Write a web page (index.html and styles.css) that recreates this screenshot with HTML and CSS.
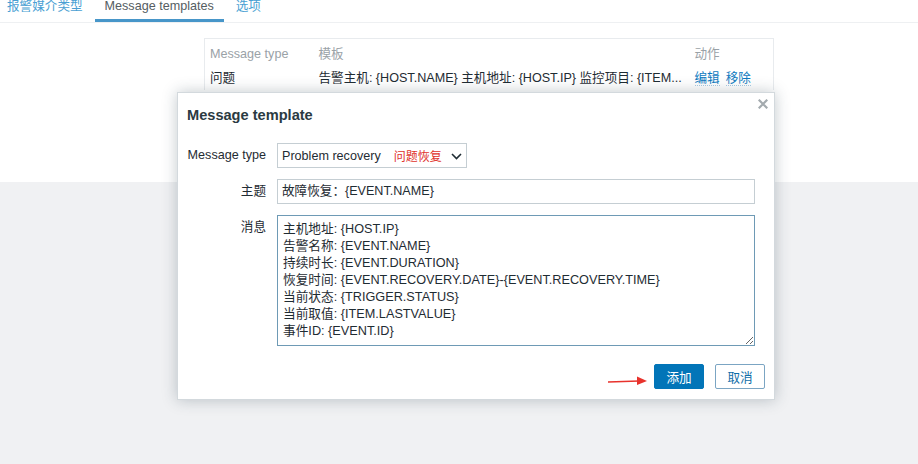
FILE: index.html
```html
<!DOCTYPE html>
<html lang="zh">
<head>
<meta charset="utf-8">
<title>Message template</title>
<link rel="stylesheet" href="styles.css">
</head>
<body>
<div class="content">
  <nav class="tabs">
    <a class="tab first">报警媒介类型</a>
    <a class="tab active">Message templates</a>
    <a class="tab">选项</a>
  </nav>
  <div class="table-area">
    <table class="tpl-table">
      <thead>
        <tr><th class="c1">Message type</th><th class="c2">模板</th><th class="c3">动作</th></tr>
      </thead>
      <tbody>
        <tr>
          <td>问题</td>
          <td>告警主机: {HOST.NAME} 主机地址: {HOST.IP} 监控项目: {ITEM...</td>
          <td><a class="link">编辑</a><a class="link next">移除</a></td>
        </tr>
      </tbody>
    </table>
  </div>
</div>

<div class="modal">
  <div class="modal-head">
    <h4 class="modal-title">Message template</h4>
    <span class="close">
      <svg width="10" height="10" viewBox="0 0 10 10"><path d="M1.5 1.5 L8.5 8.5 M8.5 1.5 L1.5 8.5" stroke="#a3aaae" stroke-width="2.2" stroke-linecap="square"/></svg>
    </span>
  </div>
  <div class="form">
    <label class="lbl">Message type</label>
    <div class="ctl">
      <div class="select">
        <span class="sel-text">Problem recovery</span>
        <span class="sel-note">问题恢复</span>
        <svg class="chev" width="11" height="7" viewBox="0 0 11 7"><path d="M1 1 L5.5 5.5 L10 1" fill="none" stroke="#1f2c33" stroke-width="1.6"/></svg>
      </div>
    </div>
    <label class="lbl">主题</label>
    <div class="ctl"><div class="input">故障恢复：{EVENT.NAME}</div></div>
    <label class="lbl">消息</label>
    <div class="ctl">
      <textarea class="textarea" spellcheck="false">主机地址: {HOST.IP}
告警名称: {EVENT.NAME}
持续时长: {EVENT.DURATION}
恢复时间: {EVENT.RECOVERY.DATE}-{EVENT.RECOVERY.TIME}
当前状态: {TRIGGER.STATUS}
当前取值: {ITEM.LASTVALUE}
事件ID: {EVENT.ID}</textarea>
    </div>
  </div>
  <div class="footer">
    <svg class="arrow" width="42" height="12" viewBox="0 0 42 12"><path d="M1 7 L32 6" stroke="#e8322c" stroke-width="1.6" fill="none"/><path d="M30 1.5 L40 6 L30 10 Z" fill="#e8322c"/></svg>
    <button class="btn primary">添加</button>
    <button class="btn secondary">取消</button>
  </div>
</div>
</body>
</html>
```
FILE: styles.css
```css
html, body {
  margin: 0;
  padding: 0;
}
body {
  background: #f0f1f3;
  font-family: "Liberation Sans", Arial, "Noto Sans CJK SC", sans-serif;
  font-size: 12.6px;
  color: #1f2c33;
  width: 918px;
  height: 464px;
  overflow: hidden;
  position: relative;
}
.content {
  background: #ffffff;
  height: 182px;
}
.tabs {
  display: flex;
  height: 22px;
  border-bottom: 1px solid #eef0f2;
  margin-left: -3px;
}
.tab {
  display: block;
  padding: 0 10px 4px;
  margin-right: 2px;
  line-height: 15px;
  color: #4a9fd3;
  border-bottom: 3px solid transparent;
  margin-top: -1px;
}
.tab.active {
  color: #555d62;
  border-bottom-color: #4796c9;
}
.table-area {
  padding: 15px 0 0 204px;
}
.tpl-table {
  width: 570px;
  table-layout: fixed;
  border-collapse: collapse;
  border: 1px solid #e8ebee;
  border-bottom: none;
}
.tpl-table th {
  text-align: left;
  font-weight: normal;
  color: #9aa2a7;
  padding: 8px 5px 2px;
  line-height: 15px;
  box-sizing: border-box;
}
.tpl-table td {
  padding: 7px 5px 4px;
  line-height: 15px;
  white-space: nowrap;
  overflow: hidden;
}
.tpl-table .c1 { width: 109px; }
.tpl-table .c3 { width: 84px; }
.link {
  color: #0f7bc0;
  border-bottom: 1px dotted #a9cbe2;
}
.link.next {
  margin-left: 6px;
}

.modal {
  position: absolute;
  left: 177px;
  top: 92px;
  width: 596px;
  height: 306px;
  background: #ffffff;
  border: 1px solid #d3d9dd;
  box-shadow: 0 0 14px rgba(40, 60, 75, 0.28);
}
.modal-head {
  position: relative;
  padding: 12px 10px 0 9px;
  height: 20px;
}
.modal-title {
  margin: 0;
  font-size: 14.6px;
  font-weight: bold;
  line-height: 20px;
  color: #2b3a42;
}
.close {
  position: absolute;
  right: 6px;
  top: 6px;
  width: 10px;
  height: 10px;
  display: block;
}
.close svg { display: block; }

.form {
  display: grid;
  grid-template-columns: 79px 478px;
  column-gap: 11px;
  row-gap: 11px;
  padding: 18px 0 0 9px;
}
.lbl {
  text-align: right;
  line-height: 25px;
  white-space: nowrap;
}
.ctl { display: flex; }
.select {
  width: 184px;
  height: 23px;
  border: 1px solid #c5ced3;
  display: flex;
  align-items: center;
  padding-left: 4px;
  position: relative;
  box-sizing: content-box;
}
.sel-text { color: #1f2c33; }
.sel-note {
  color: #e0322b;
  margin-left: 13px;
  font-size: 12px;
}
.chev {
  position: absolute;
  right: 4px;
  top: 9px;
}
.input {
  width: 472px;
  height: 23px;
  line-height: 23px;
  border: 1px solid #c5ced3;
  padding-left: 4px;
  box-sizing: content-box;
}
.textarea {
  width: 478px;
  height: 131px;
  box-sizing: border-box;
  border: 1px solid #6e9ab5;
  padding: 5px 5px 4px;
  margin: 0;
  font-family: "Liberation Sans", Arial, "Noto Sans CJK SC", sans-serif;
  font-size: 12.7px;
  line-height: 17px;
  color: #1f2c33;
  resize: both;
  outline: none;
  overflow: hidden;
}

.footer {
  display: flex;
  justify-content: flex-end;
  align-items: center;
  gap: 11px;
  padding: 18px 9px 0 0;
}
.arrow {
  margin-right: -6px;
  margin-top: 9px;
}
.btn {
  height: 25px;
  width: 50px;
  padding: 0;
  font-family: "Liberation Sans", Arial, "Noto Sans CJK SC", sans-serif;
  font-size: 12.6px;
  border-radius: 2px;
  cursor: pointer;
}
.btn.primary {
  background: #0275b8;
  color: #ffffff;
  border: 1px solid #0275b8;
}
.btn.secondary {
  background: #ffffff;
  color: #0f6ea8;
  border: 1px solid #7ba5c3;
}
```
